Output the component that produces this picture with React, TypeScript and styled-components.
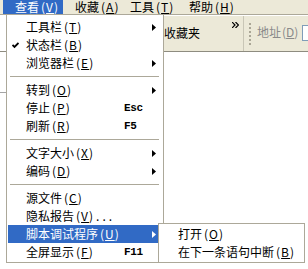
import React from "react";
import styled, { createGlobalStyle } from "styled-components";

const GlobalStyle = createGlobalStyle`
  html, body {
    margin: 0;
    padding: 0;
    background: #fff;
  }
  body {
    font-family: "Noto Sans CJK SC", "Liberation Sans", sans-serif;
    font-size: 12px;
    color: #000;
  }
`;

const Screen = styled.div`
  position: relative;
  width: 308px;
  height: 269px;
  overflow: hidden;
  background: #fff;
  display: flex;
  flex-direction: column;
`;

const MenuBar = styled.div`
  display: flex;
  height: 14px;
  padding-left: 3px;
  background: #ece9d8;
  border-bottom: 1px solid #aca899;
`;

const BarItem = styled.div<{ $width: number; $active?: boolean }>`
  box-sizing: border-box;
  flex-shrink: 0;
  width: ${(p) => p.$width}px;
  padding-left: 12px;
  height: 14px;
  line-height: 14px;
  white-space: nowrap;
  background: ${(p) => (p.$active ? "#316ac5" : "transparent")};
  color: ${(p) => (p.$active ? "#fff" : "#000")};
`;

const Hot = styled.span<{ $tight?: boolean }>`
  margin-left: ${(p) => (p.$tight ? 1 : 2)}px;
  letter-spacing: ${(p) => (p.$tight ? 0 : 1)}px;
`;

const Dots = styled.span`
  letter-spacing: 3px;
  margin-left: 2px;
`;

const Toolbar = styled.div`
  display: grid;
  grid-template-columns: 6px 238px 7px 51px 1fr;
  align-items: start;
  height: 37px;
  box-sizing: border-box;
  overflow: hidden;
  background: #ece9d8;
  border-top: 1px solid #fff;
  border-bottom: 1px solid #8e8c80;
`;

const LeftGap = styled.div`
  align-self: stretch;
  background: #fff;
`;

const LinksBand = styled.div`
  display: flex;
  align-items: flex-start;
  justify-content: space-between;
  align-self: stretch;
  padding: 0 4px 0 158px;
  box-sizing: border-box;
  border-right: 1px solid #c9c6b6;
`;

const BandLabel = styled.div`
  margin-top: 8px;
  line-height: 18px;
  white-space: nowrap;
`;

const Chevron = styled.svg`
  margin-top: 6px;
`;

const Gripper = styled.div`
  width: 2px;
  height: 22px;
  margin: 7px 0 0 5px;
  background: repeating-linear-gradient(
    to bottom,
    #aaa696 0 2px,
    transparent 2px 4px
  );
`;

const AddressLabel = styled.div`
  margin: 7px 0 0 6px;
  line-height: 18px;
  color: #8a8a8a;
  white-space: nowrap;
`;

const AddressBox = styled.div`
  width: 20px;
  height: 14px;
  margin-top: 9px;
  background: #fff;
  border: 1px solid #7f9db9;
`;

const Body = styled.div`
  flex: 1;
  background: #fff;
`;

const EdgeTick = styled.div`
  width: 6px;
  height: 1px;
  margin-top: 40px;
  background: #a5a5a5;
`;

const Menu = styled.div<{ $left: number; $top: number; $width: number; $padTop: number }>`
  position: absolute;
  left: ${(p) => p.$left}px;
  top: ${(p) => p.$top}px;
  width: ${(p) => p.$width}px;
  box-sizing: border-box;
  background: #fff;
  border: 1px solid #aca899;
  padding: ${(p) => p.$padTop}px 1px 1px;
`;

const Row = styled.div<{ $active?: boolean; $label: number }>`
  display: grid;
  grid-template-columns: 18px ${(p) => p.$label}px 26px 1fr;
  align-items: center;
  height: 18px;
  line-height: 18px;
  white-space: nowrap;
  background: ${(p) => (p.$active ? "#316ac5" : "transparent")};
  color: ${(p) => (p.$active ? "#fff" : "#000")};
`;

const CheckCell = styled.div`
  display: flex;
  align-items: center;
  padding-left: 4px;
`;

const Shortcut = styled.span`
  font-family: "Liberation Mono", "DejaVu Sans Mono", monospace;
  font-size: 11px;
  font-weight: bold;
  letter-spacing: -0.4px;
`;

const ArrowCell = styled.div`
  display: flex;
  align-items: center;
  padding-left: 2px;
`;

const Separator = styled.div`
  height: 1px;
  margin: 4px 3px 4px 2px;
  background: #aca899;
`;

const Check = () => (
  <svg width="7" height="7" viewBox="0 0 7 7">
    <polyline
      points="0.5,3 2.5,5 6.5,1"
      fill="none"
      stroke="#000"
      strokeWidth="1.8"
    />
  </svg>
);

const Arrow = ({ white }: { white?: boolean }) => (
  <svg width="4" height="7" viewBox="0 0 4 7">
    <polygon points="0,0 4,3.5 0,7" fill={white ? "#fff" : "#000"} />
  </svg>
);

interface ItemProps {
  label: string;
  hotkey: string;
  dots?: boolean;
  shortcut?: string;
  checked?: boolean;
  submenu?: boolean;
  active?: boolean;
  labelWidth?: number;
}

const Item = (props: ItemProps) => (
  <Row $active={props.active} $label={props.labelWidth ?? 98}>
    <CheckCell>{props.checked && <Check />}</CheckCell>
    <span>
      {props.label}
      <Hot>
        (<u>{props.hotkey}</u>)
      </Hot>
      {props.dots && <Dots>...</Dots>}
    </span>
    <Shortcut>{props.shortcut}</Shortcut>
    <ArrowCell>{props.submenu && <Arrow white={props.active} />}</ArrowCell>
  </Row>
);

const BarLabel = ({ label, hotkey }: { label: string; hotkey: string }) => (
  <>
    {label}
    <Hot>
      (<u>{hotkey}</u>)
    </Hot>
  </>
);

export default function App() {
  return (
    <>
      <GlobalStyle />
      <Screen>
        <MenuBar>
          <BarItem $width={60} $active>
            <BarLabel label="查看" hotkey="V" />
          </BarItem>
          <BarItem $width={55}>
            <BarLabel label="收藏" hotkey="A" />
          </BarItem>
          <BarItem $width={59}>
            <BarLabel label="工具" hotkey="T" />
          </BarItem>
          <BarItem $width={60}>
            <BarLabel label="帮助" hotkey="H" />
          </BarItem>
        </MenuBar>

        <Toolbar>
          <LeftGap />
          <LinksBand>
            <BandLabel>收藏夹</BandLabel>
            <Chevron width="7" height="6" viewBox="0 0 7 6">
              <polyline points="0,0 3,3 0,6" fill="none" stroke="#000" strokeWidth="1.2" />
              <polyline points="3.5,0 6.5,3 3.5,6" fill="none" stroke="#000" strokeWidth="1.2" />
            </Chevron>
          </LinksBand>
          <Gripper />
          <AddressLabel>
            地址<Hot $tight>(<u>D</u>)</Hot>
          </AddressLabel>
          <AddressBox />
        </Toolbar>

        <Body>
          <EdgeTick />
        </Body>

        <Menu $left={6} $top={14} $width={158} $padTop={3}>
          <Item label="工具栏" hotkey="T" submenu />
          <Item label="状态栏" hotkey="B" checked />
          <Item label="浏览器栏" hotkey="E" submenu />
          <Separator />
          <Item label="转到" hotkey="O" submenu />
          <Item label="停止" hotkey="P" shortcut="Esc" />
          <Item label="刷新" hotkey="R" shortcut="F5" />
          <Separator />
          <Item label="文字大小" hotkey="X" submenu />
          <Item label="编码" hotkey="D" submenu />
          <Separator />
          <Item label="源文件" hotkey="C" />
          <Item label="隐私报告" hotkey="V" dots />
          <Item label="脚本调试程序" hotkey="U" submenu active />
          <Item label="全屏显示" hotkey="F" shortcut="F11" />
        </Menu>

        <Menu $left={158} $top={223} $width={147} $padTop={1}>
          <Item label="打开" hotkey="O" labelWidth={125} />
          <Item label="在下一条语句中断" hotkey="B" labelWidth={125} />
        </Menu>
      </Screen>
    </>
  );
}
